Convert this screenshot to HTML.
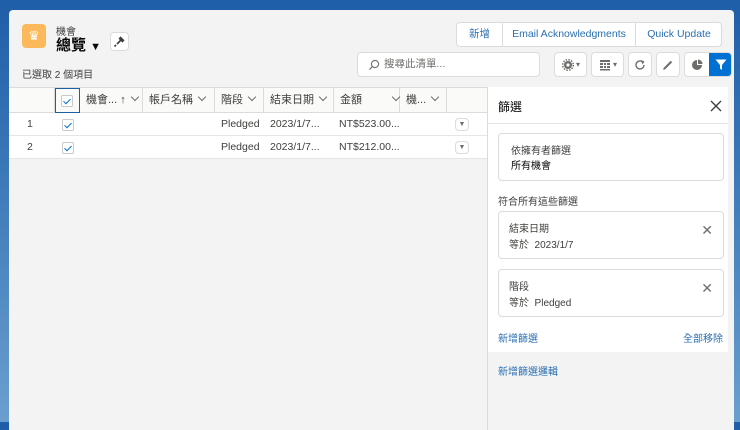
<!DOCTYPE html>
<html><head><meta charset="utf-8"><style>
*{box-sizing:border-box;margin:0;padding:0}
body{width:740px;height:422px;overflow:hidden;background:linear-gradient(180deg,#1f5ea8,#3b78b8 40%,#6a9fcf);font-family:"Liberation Sans","Noto Sans CJK TC",sans-serif;color:#080707;position:relative}
.card{position:absolute;left:9px;top:10px;width:725px;height:420px;background:#f3f3f3;border-radius:4px 4px 0 0;overflow:hidden}
.abs{position:absolute}
.btn{position:absolute;background:#fff;border:1px solid #dddbda;border-radius:4px;height:25px}
.blue{color:#2a6fb0}
.th{position:absolute;top:0;height:25px;border-right:1px solid #dddbda;font-size:11px;color:#3e3e3c;line-height:25px;padding-left:6px;white-space:nowrap}
.cb{position:absolute;width:12px;height:12px;border:1px solid #c9c9c9;border-radius:2px;background:#fff}
.cb:after{content:"";position:absolute;left:3px;top:1px;width:3px;height:6px;border:solid #0070d2;border-width:0 1.5px 1.5px 0;transform:rotate(45deg)}
.chev{display:inline-block;width:6px;height:6px;border:solid #706e6b;border-width:0 1px 1px 0;transform:rotate(45deg);margin-left:6px;position:relative;top:-3px}
.fbox{position:absolute;left:10px;width:226px;background:#fff;border:1px solid #dddbda;border-radius:4px;font-size:10px;color:#3e3e3c}
.x{position:absolute;right:10px;top:10px;font-size:14px;color:#706e6b}
.cell{position:absolute;top:0;white-space:nowrap}
</style></head><body>
<div class="card">
 <div class="abs" style="left:13px;top:14px;width:24px;height:24px;background:#fcb95b;border-radius:4px;color:#fff;font-size:13px;text-align:center;line-height:24px">♛</div>
 <div class="abs" style="left:47px;top:13px;font-size:10px;color:#3e3e3c">機會</div>
 <div class="abs" style="left:47px;top:24px;font-size:15px;font-weight:bold">總覽 <span style="font-size:11px">▼</span></div>
 <div class="btn" style="left:101px;top:22px;width:19px;height:19px">
  <svg width="17" height="17" viewBox="0 0 17 17" class="abs" style="left:0;top:0"><path d="M6 11 L10 7 M8 5 L12 9 M9 4 L13 8 M5 12 L3.5 13.5" stroke="#3e3e3c" stroke-width="1.6" fill="none"/></svg></div>
 <div class="abs" style="left:13px;top:56px;font-size:10px;color:#3e3e3c">已選取 2 個項目</div>
 <div class="btn" style="left:447px;top:12px;width:266px;height:25px;font-size:10.5px;line-height:23px">
  <span class="abs blue" style="left:0;width:46px;text-align:center;border-right:1px solid #dddbda">新增</span>
  <span class="abs blue" style="left:46px;width:133px;text-align:center;border-right:1px solid #dddbda">Email Acknowledgments</span>
  <span class="abs blue" style="left:179px;width:86px;text-align:center">Quick Update</span>
 </div>
 <div class="btn" style="left:348px;top:42px;width:183px;height:25px;font-size:10.5px;line-height:23px;color:#706e6b;padding-left:26px">
  <svg width="12" height="12" class="abs" style="left:10px;top:6px"><circle cx="7" cy="5" r="3.6" stroke="#706e6b" fill="none" stroke-width="1.1"/><path d="M4.4 7.6 L1.5 10.5" stroke="#706e6b" stroke-width="1.2"/></svg>搜尋此清單...</div>
 <div class="btn" style="left:545px;top:42px;width:33px;font-size:8px;line-height:23px;color:#706e6b;padding-left:21px">▾
  <svg width="12" height="12" class="abs" style="left:7px;top:6px"><circle cx="6" cy="6" r="4" fill="#706e6b"/><circle cx="6" cy="6" r="5.3" fill="none" stroke="#706e6b" stroke-width="1.5" stroke-dasharray="1.5 1.3"/><circle cx="6" cy="6" r="1.6" fill="#fff"/></svg></div>
 <div class="btn" style="left:582px;top:42px;width:33px;font-size:8px;line-height:23px;color:#706e6b;padding-left:21px">▾
  <svg width="12" height="12" class="abs" style="left:7px;top:6px"><g fill="#706e6b"><rect x="1" y="1" width="10" height="2"/><rect x="1" y="4" width="3" height="2"/><rect x="5" y="4" width="2" height="2"/><rect x="8" y="4" width="3" height="2"/><rect x="1" y="7" width="3" height="2"/><rect x="5" y="7" width="2" height="2"/><rect x="8" y="7" width="3" height="2"/><rect x="1" y="10" width="10" height="1.5"/></g></svg></div>
 <div class="btn" style="left:619px;top:42px;width:24px">
  <svg width="12" height="12" class="abs" style="left:5px;top:6px"><path d="M10 6 A4 4 0 1 1 8.5 2.8" stroke="#706e6b" stroke-width="1.4" fill="none"/><path d="M7 1 L10.5 2.5 L8.5 5.5Z" fill="#706e6b"/></svg></div>
 <div class="btn" style="left:647px;top:42px;width:24px">
  <svg width="12" height="12" class="abs" style="left:5px;top:6px"><path d="M2 10 L9.5 2.5" stroke="#706e6b" stroke-width="2"/><path d="M1 11 L2 9 L3 10Z" fill="#706e6b"/></svg></div>
 <div class="btn" style="left:675px;top:42px;width:48px;overflow:hidden">
  <svg width="12" height="12" class="abs" style="left:6px;top:6px"><path d="M6 6 L6 1 A5 5 0 1 0 11 6Z" fill="#706e6b"/><path d="M7 5 L7 0.5 A4.5 4.5 0 0 1 11.5 5Z" fill="#706e6b"/></svg>
  <span class="abs" style="left:24px;top:-1px;width:24px;height:25px;background:#0070d2">
   <svg width="12" height="12" class="abs" style="left:6px;top:7px"><path d="M0.5 0.5 H11.5 L7 6 V11 L5 9.5 V6Z" fill="#fff"/></svg></span>
 </div>
 <!-- table -->
 <div class="abs" style="left:0;top:77px;width:478px;height:72px;background:#fff;border-top:1px solid #dddbda">
  <div class="abs" style="left:0;top:0;width:478px;height:25px;background:#fafaf9;border-bottom:1px solid #dddbda"></div>
  <div class="th" style="left:0;width:46px"></div>
  <div class="th" style="left:46px;width:25px;padding:0;border:1px solid #1b5fa8;"><div class="cb" style="left:5px;top:6px"></div></div>
  <div class="th" style="left:71px;width:63px">機會... ↑<span class="chev"></span></div>
  <div class="th" style="left:134px;width:72px">帳戶名稱<span class="chev"></span></div>
  <div class="th" style="left:206px;width:49px">階段<span class="chev"></span></div>
  <div class="th" style="left:255px;width:70px">結束日期<span class="chev"></span></div>
  <div class="th" style="left:325px;width:66px">金額 <span class="chev" style="margin-left:28px"></span></div>
  <div class="th" style="left:391px;width:47px">機...<span class="chev"></span></div>
  <div class="abs" style="left:0;top:25px;width:478px;height:23px;border-bottom:1px solid #e5e5e5;font-size:10.5px;color:#3e3e3c;line-height:23px">
   <span class="cell" style="left:18px">1</span><div class="cb" style="left:53px;top:6px"></div>
   <span class="cell" style="left:212px">Pledged</span><span class="cell" style="left:261px">2023/1/7...</span><span class="cell" style="left:330px">NT$523.00...</span>
   <span class="btn" style="left:446px;top:5px;width:14px;height:13px;font-size:7px;line-height:11px;text-align:center;color:#706e6b">▼</span></div>
  <div class="abs" style="left:0;top:48px;width:478px;height:23px;border-bottom:1px solid #e5e5e5;font-size:10.5px;color:#3e3e3c;line-height:23px">
   <span class="cell" style="left:18px">2</span><div class="cb" style="left:53px;top:6px"></div>
   <span class="cell" style="left:212px">Pledged</span><span class="cell" style="left:261px">2023/1/7...</span><span class="cell" style="left:330px">NT$212.00...</span>
   <span class="btn" style="left:446px;top:5px;width:14px;height:13px;font-size:7px;line-height:11px;text-align:center;color:#706e6b">▼</span></div>
 </div>
 <!-- panel -->
 <div class="abs" style="left:478px;top:77px;width:240px;height:345px;background:#f3f3f3;border-left:1px solid #dddbda">
  <div class="abs" style="left:0;top:0;width:240px;height:265px;background:#fff"></div>
  <div class="abs" style="left:10px;top:11px;font-size:12px">篩選</div>
  <svg width="12" height="12" class="abs" style="left:222px;top:13px"><path d="M1 1 L11 11 M11 1 L1 11" stroke="#3e3e3c" stroke-width="1.4"/></svg>
  <div class="abs" style="left:0;top:36px;width:240px;border-top:1px solid #e5e5e5"></div>
  <div class="fbox" style="top:46px;height:48px;padding:10px 0 0 12px;line-height:15px">依擁有者篩選<br><span style="color:#080707">所有機會</span></div>
  <div class="abs" style="left:10px;top:106px;font-size:10px;color:#3e3e3c">符合所有這些篩選</div>
  <div class="fbox" style="top:124px;height:48px;padding:10px 0 0 10px;line-height:16px">結束日期<br>等於&nbsp; 2023/1/7<span class="x">✕</span></div>
  <div class="fbox" style="top:182px;height:48px;padding:10px 0 0 10px;line-height:16px">階段<br>等於&nbsp; Pledged<span class="x">✕</span></div>
  <div class="abs blue" style="left:10px;top:243px;font-size:10px">新增篩選</div>
  <div class="abs blue" style="right:4px;top:243px;font-size:10px">全部移除</div>
  <div class="abs blue" style="left:10px;top:276px;font-size:10px">新增篩選邏輯</div>
 </div>
</div>
</body></html>
